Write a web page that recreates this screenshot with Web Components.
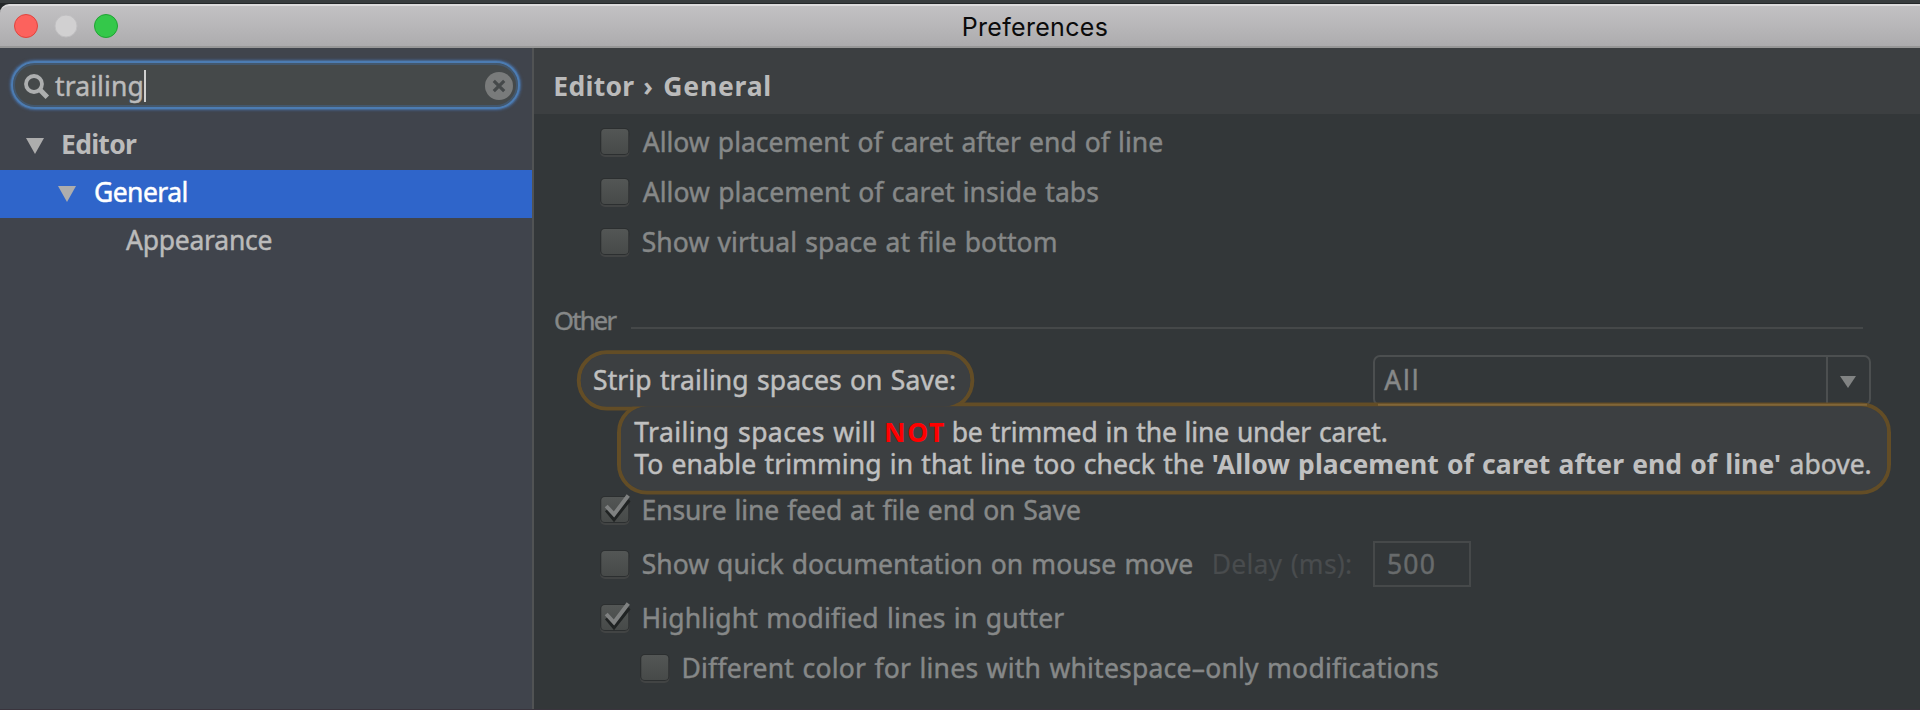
<!DOCTYPE html>
<html lang="en">
<head>
<meta charset="utf-8">
<title>Preferences</title>
<style>
html,body{margin:0;height:100%;overflow:hidden;background:#34383b}
body{font:26.5px/32px "Noto Sans","Open Sans",sans-serif;color:#bbbbbb}
</style>
</head>
<body>
<pref-window></pref-window>
<script>
const define=(name,html,init)=>{
  const t=document.createElement('template');
  t.innerHTML=html;
  customElements.define(name,class extends HTMLElement{
    connectedCallback(){
      if(this.shadowRoot)return;
      this.attachShadow({mode:'open'}).append(t.content.cloneNode(true));
      if(init)init.call(this,this.shadowRoot);
    }
  });
};

/* A run of text tracked so that its ink spans exactly `w` pixels. */
const ctx=document.createElement('canvas').getContext('2d');
define('fit-text',`<style>:host{display:block;flex:none;white-space:pre;line-height:32px;height:32px}span{display:block;-webkit-text-stroke:var(--heft,.45px) currentColor}</style><span><slot></slot></span>`,function(root){
  const w=+this.getAttribute('w'),s=this.textContent,cs=getComputedStyle(this),span=root.querySelector('span');
  ctx.font=`${cs.fontWeight} ${cs.fontSize} ${cs.fontFamily}`;
  const m=ctx.measureText(s),size=parseFloat(cs.fontSize);
  const gap=size*.045,spaces=s.split(' ').length-1;
  const ink=m.actualBoundingBoxRight+m.actualBoundingBoxLeft+gap*spaces;
  this.style.width=w+'px';
  if(+cs.fontWeight>500)this.style.setProperty('--heft','0');
  span.style.cssText=`word-spacing:${gap}px;letter-spacing:${(w-ink)/(s.length-1)}px;margin-left:${m.actualBoundingBoxLeft}px`;
});

define('title-bar',`<style>
:host{display:grid;grid-template-columns:963.7px 1fr;box-sizing:border-box;border-top:2px solid #dcdbdc;border-bottom:2px solid #979797;border-radius:9px 0 0 0;background:linear-gradient(#c2c1c3,#adacae);height:44px}
svg{display:block}
fit-text{color:#0b0b0b;font-family:Inter,sans-serif;font-size:25px;margin-top:4.5px;--heft:0}
</style>
<svg width="130" height="40" viewBox="0 6 130 40">
<circle cx="26" cy="26" r="11.5" fill="#fc625d" stroke="#e0443e"/>
<circle cx="66" cy="26" r="11" fill="#d1d0d1" stroke="#c0bfc1"/>
<circle cx="106" cy="26" r="11.5" fill="#34c84a" stroke="#1fa433"/>
</svg><fit-text w="143">Preferences</fit-text>`);

define('search-field',`<style>
:host{display:flex;align-items:flex-start;box-sizing:border-box;margin:13px 12px 0 11px;height:48px;border-radius:24px;border:2px solid #4c7cb3;box-shadow:0 0 0 1px #46648a,0 0 2px 2px #435672,inset 0 0 0 2px #43576c;background:#45494a;padding-left:10px}
svg{display:block;flex:none}
.i{margin:10px 3px 0 0}
fit-text{margin-top:7px}
i{width:2px;height:32px;background:#d0d0d0;margin:7px auto 0 1.5px}
.c{margin:9px 5px 0 0}
</style>
<svg class="i" width="29" height="28" viewBox="23 73 29 28"><g fill="none" stroke="#adafaf"><circle cx="34" cy="84" r="8" stroke-width="3.8"/><path d="M39.7 89.5L47.3 97.2" stroke-width="5"/></g></svg>
<fit-text w="87.5">trailing</fit-text><i></i>
<svg class="c" width="28" height="28"><circle cx="14" cy="14" r="14" fill="#797b7b"/><path d="M8.8 8.8L19.2 19.2M19.2 8.8L8.8 19.2" stroke="#45494a" stroke-width="3.2"/></svg>`);

define('tree-row',`<style>
:host{display:flex;height:48px;align-items:flex-start}
:host([selected]){background:#2f65ca;color:#fff}
:host([bold]){font-weight:700}
svg{display:block;margin:16px 19px 0 0;flex:none}
:host([leaf]) svg{display:none}
::slotted(*){margin-top:6px}
</style><svg width="18" height="16"><path d="M0 0H18L9 16Z" fill="#adadad"/></svg><slot></slot>`);

define('side-bar',`<style>
:host{display:block;width:532px;border-right:2px solid #515354;background:#40444c}
.tree{margin-top:13px}
</style><search-field></search-field><div class="tree">
<tree-row bold style="padding-left:26px"><fit-text w="74">Editor</fit-text></tree-row>
<tree-row selected style="padding-left:58px"><fit-text w="91.5">General</fit-text></tree-row>
<tree-row leaf style="padding-left:126px"><fit-text w="145.5">Appearance</fit-text></tree-row></div>`);

define('check-row',`<style>
:host{display:flex;height:32px;margin-left:64px}
svg{display:block;flex:none;margin:-2px 10.7px 0 0;overflow:visible}
path{display:none;fill:none;stroke-width:4;stroke-linejoin:miter}
:host([checked]) path{display:block}
</style><svg width="34" height="34" viewBox="0 0 34 34">
<defs><linearGradient id="g" x2="0" y2="1"><stop stop-color="#535655"/><stop offset="1" stop-color="#474a49"/></linearGradient></defs>
<rect x="2" y="8" width="29.5" height="25" rx="5" fill="#424444"/>
<rect x="2" y="4" width="29.5" height="27" rx="5" fill="#2c2f30"/>
<rect x="3.3" y="5" width="27" height="25" rx="3.5" fill="url(#g)"/>
<path d="M8.5 18L16 27L31 8" stroke="#202323"/><path d="M8.2 14L16 22.5L30.3 3.5" stroke="#7f8181"/>
</svg><slot></slot>`);

define('section-title',`<style>
:host{display:flex;height:32px;margin:46px 57px 0 21px}
i{flex:1;height:2px;margin:23px 0 0 13.5px;background:#454849}
</style><slot></slot><i></i>`);

define('combo-box',`<style>
:host{display:flex;box-sizing:border-box;width:498px;height:51px;border:2px solid #4c4f50;border-radius:7px}
fit-text{margin:7px auto 0 9px}
b{width:43px;box-sizing:border-box;border-left:2px solid #4c4f50}
svg{display:block;margin:19px 0 0 12px}
</style><fit-text w="32.5">All</fit-text><b><svg width="16" height="12"><path d="M0 0H16L8 12Z" fill="#818383"/></svg></b>`);

/* Two merged spotlight balloons around the search hits. */
define('hit-balloons',`<style>
:host{position:absolute;left:42px;top:-5px;pointer-events:none}
svg{display:block}
</style><svg width="1318" height="150" viewBox="576 350 1318 150">
<g fill="#3c3f41" stroke="#634d26" stroke-width="4"><rect x="578.8" y="352.3" width="393.5" height="56.3" rx="28"/><rect x="619" y="404.5" width="1270" height="88" rx="28"/></g>
<g fill="#3c3f41"><rect x="580.8" y="354.3" width="389.5" height="52.3" rx="26"/><rect x="621" y="406.5" width="1266" height="84" rx="26"/></g>
<path d="M1378 404.8H1867" stroke="#806639" stroke-width="2"/></svg>`);

define('strip-setting',`<style>
:host{display:block;position:relative;height:139px;margin-top:19px}
.top{display:flex;height:51px;padding-left:60px}
.top fit-text{margin:9px 418.3px 0 0;position:relative;z-index:1}
.note{position:relative;z-index:1;margin:10px 0 0 100.3px}
.l{display:flex}
.l fit-text,.top fit-text{color:#c0c0c0}
.l .not{color:#f00;margin:0 9.7px 0 12px}
.q{margin:0 10.6px 0 9.4px}
</style><hit-balloons></hit-balloons>
<div class="top"><fit-text w="361">Strip trailing spaces on Save:</fit-text><combo-box></combo-box></div>
<div class="note"><div class="l"><fit-text w="239.7">Trailing spaces will</fit-text><fit-text class="not" w="58" style="font-weight:700">NOT</fit-text><fit-text w="433">be trimmed in the line under caret.</fit-text></div>
<div class="l"><fit-text w="569">To enable trimming in that line too check the</fit-text><fit-text class="q" w="567.3" style="font-weight:700">'Allow placement of caret after end of line'</fit-text><fit-text w="80">above.</fit-text></div></div>`);

define('delay-field',`<style>
:host{display:flex;margin-left:21.5px;color:#494c4e;--heft:.2px}
div{box-sizing:border-box;width:98px;height:46px;border:2px solid #46494a;margin:-7px 0 0 22px;padding:5px 0 0 13px;color:#686b6c;--heft:.45px}
</style><fit-text w="137.3">Delay (ms):</fit-text><div><fit-text w="45.7">500</fit-text></div>`);

define('settings-page',`<style>
:host{display:block;background:#333739;color:#868888;overflow:hidden}
header{height:66px;box-sizing:border-box;background:#3c3f41;padding:22px 0 0 21.3px;display:flex;font-weight:700;color:#bbbbbb}
.list{display:flex;flex-direction:column;gap:18px;margin-top:12px}
.more{display:flex;flex-direction:column;gap:22px}
.e{margin-left:.8px}
</style>
<header><fit-text w="79">Editor</fit-text><fit-text w="8.5" style="margin:0 11.5px 0 10px">›</fit-text><fit-text w="105">General</fit-text></header>
<div class="list">
<check-row><fit-text w="519.5">Allow placement of caret after end of line</fit-text></check-row>
<check-row><fit-text w="455.5">Allow placement of caret inside tabs</fit-text></check-row>
<check-row><fit-text w="413">Show virtual space at file bottom</fit-text></check-row>
</div>
<section-title><fit-text w="62.5" style="font-size:25.5px">Other</fit-text></section-title>
<strip-setting></strip-setting>
<div class="more">
<check-row checked><fit-text class="e" w="436.5">Ensure line feed at file end on Save</fit-text></check-row>
<check-row><fit-text w="549.5">Show quick documentation on mouse move</fit-text><delay-field></delay-field></check-row>
<check-row checked><fit-text class="e" w="420.8">Highlight modified lines in gutter</fit-text></check-row>
<check-row style="margin:-4px 0 0 104px"><fit-text class="e" w="754.6">Different color for lines with whitespace–only modifications</fit-text></check-row>
</div>`);

define('pref-window',`<style>
:host{display:grid;grid-template:44px 1fr / 534px 1fr;height:710px;width:1920px;box-sizing:border-box;padding-top:4px;border-bottom:1px solid #3a343d;background:linear-gradient(#383c3e 0 3px,#242729 3px 12px,#40444c 12px)}
title-bar{grid-column:1/3}
</style><title-bar></title-bar><side-bar></side-bar><settings-page></settings-page>`);
</script>
</body>
</html>
